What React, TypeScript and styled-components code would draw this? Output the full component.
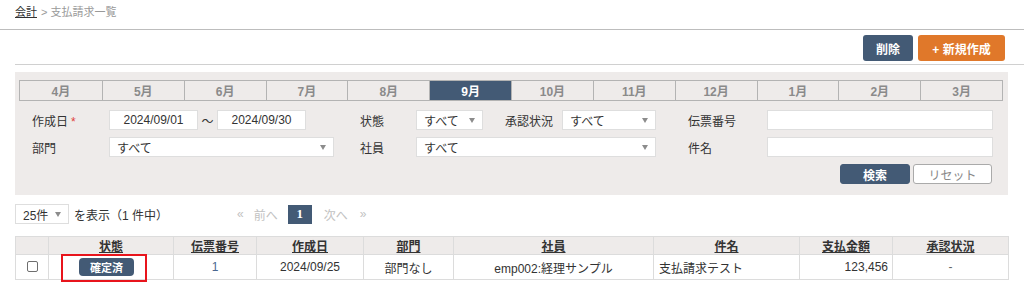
import React from 'react';
import styled, { createGlobalStyle } from 'styled-components';

const Global = createGlobalStyle`
  html, body { margin: 0; padding: 0; background: #fff; min-height: 291px; }
  body {
    font-family: "Liberation Sans", Arial, "Noto Sans CJK JP", sans-serif;
    font-size: 12px;
    color: #333;
  }
  * { box-sizing: border-box; }
`;

const NAVY = '#435a75';

const Page = styled.div`
  padding-bottom: 12px;
`;

const Breadcrumb = styled.div`
  height: 30px;
  border-bottom: 1px solid #bdbdbd;
  padding: 5px 0 0 15px;
  font-size: 11px;
  line-height: 14px;
  color: #999;
`;

const CrumbLink = styled.span`
  color: #333;
  text-decoration: underline;
  margin-right: 4px;
`;

const Toolbar = styled.div`
  display: flex;
  justify-content: flex-end;
  gap: 5px;
  margin-left: 15px;
  padding: 5px 19px 3px 0;
  border-bottom: 1px solid #d0d0d0;
`;

const ActionButton = styled.button<{ $color: string; $w: number }>`
  width: ${p => p.$w}px;
  height: 26px;
  border: none;
  border-radius: 3px;
  background: ${p => p.$color};
  color: #fff;
  font-family: inherit;
  font-size: 12px;
  font-weight: bold;
  padding: 0;
`;

const Panel = styled.div`
  margin: 7px 16px 0 15px;
  background: #eeebea;
  padding: 8px 5px 11px 4px;
`;

const MonthBar = styled.div`
  display: grid;
  grid-template-columns: repeat(12, 1fr);
  border: 1px solid #b3b3b3;
  height: 21px;
`;

const MonthCell = styled.div<{ $active?: boolean }>`
  display: flex;
  align-items: center;
  justify-content: center;
  border-left: 1px solid #b3b3b3;
  &:first-child { border-left: none; }
  background: ${p => (p.$active ? NAVY : 'transparent')};
  color: ${p => (p.$active ? '#fff' : '#8a8a8a')};
  font-weight: bold;
  font-size: 12px;
`;

const Form = styled.div`
  display: grid;
  grid-template-columns: 77px 251px 56px 272px 79px 226px;
  grid-auto-rows: 20px;
  row-gap: 7px;
  margin: 9px 0 0 13px;
  align-items: center;
`;

const Label = styled.div`
  font-size: 12px;
  color: #333;
  white-space: nowrap;
`;

const Required = styled.span`
  color: #e0413a;
  margin-left: 3px;
`;

const FieldGroup = styled.div`
  display: flex;
  align-items: center;
  height: 20px;
`;

const TextInput = styled.div<{ $w: number; $center?: boolean }>`
  width: ${p => p.$w}px;
  height: 20px;
  background: #fff;
  border: 1px solid #dedede;
  display: flex;
  align-items: center;
  justify-content: ${p => (p.$center ? 'center' : 'flex-start')};
  padding: 0 6px;
  color: #333;
  font-size: 12px;
`;

const Tilde = styled.div`
  width: 19px;
  text-align: center;
  color: #333;
`;

const Select = styled.div<{ $w: number; $h?: number }>`
  width: ${p => p.$w}px;
  height: ${p => p.$h ?? 20}px;
  background: #fff;
  border: 1px solid #dedede;
  display: flex;
  align-items: center;
  justify-content: space-between;
  padding: 0 7px 0 7px;
  color: #333;
  font-size: 12px;
  flex: none;
`;

const Arrow = styled.span`
  width: 0;
  height: 0;
  border-left: 3.5px solid transparent;
  border-right: 3.5px solid transparent;
  border-top: 5px solid #8c8c8c;
`;

const InlineLabel = styled(Label)`
  width: 57px;
  margin-left: 22px;
`;

const ButtonRow = styled.div`
  grid-column: 1 / -1;
  display: flex;
  justify-content: flex-end;
  gap: 3px;
  margin-right: 1px;
  height: 20px;
  align-self: start;
`;

const SearchButton = styled.button<{ $primary?: boolean; $w: number }>`
  width: ${p => p.$w}px;
  height: 20px;
  border-radius: 3px;
  border: 1px solid ${p => (p.$primary ? NAVY : '#aaa')};
  background: ${p => (p.$primary ? NAVY : '#fff')};
  color: ${p => (p.$primary ? '#fff' : '#888')};
  font-family: inherit;
  font-weight: ${p => (p.$primary ? 'bold' : 'normal')};
  font-size: 12px;
  padding: 0;
`;

const PagerRow = styled.div`
  display: flex;
  align-items: center;
  margin: 9px 0 0 15px;
  height: 20px;
`;

const PerPage = styled.div`
  display: flex;
  align-items: center;
  width: 222px;
  gap: 5px;
`;

const Pager = styled.div`
  display: flex;
  align-items: center;
  color: #c2c2c2;
  font-size: 12px;
`;

const PagerText = styled.span<{ $ml: number }>`
  margin-left: ${p => p.$ml}px;
`;

const PageBox = styled.span`
  margin-left: 10px;
  width: 24px;
  height: 19px;
  background: ${NAVY};
  color: #fff;
  font-family: "Liberation Serif", "Times New Roman", serif;
  font-weight: bold;
  font-size: 13px;
  display: flex;
  align-items: center;
  justify-content: center;
`;

const Table = styled.table`
  margin: 12px 0 0 15px;
  width: 993px;
  border-collapse: collapse;
  table-layout: fixed;
  font-size: 12px;
`;

const Th = styled.th`
  height: 18px;
  background: #eeebea;
  border: 1px solid #dcdcdc;
  font-weight: bold;
  text-decoration: underline;
  color: #333;
  padding: 0;
  text-align: center;
`;

const Td = styled.td<{ $align?: string; $pad?: string; $color?: string }>`
  height: 25px;
  border: 1px solid #dcdcdc;
  padding: ${p => p.$pad ?? '0'};
  text-align: ${p => p.$align ?? 'center'};
  color: ${p => p.$color ?? '#333'};
  position: relative;
`;

const CheckBox = styled.span`
  display: inline-block;
  width: 11px;
  height: 11px;
  border: 1px solid #6e6e6e;
  border-radius: 2px;
  background: #fff;
  vertical-align: middle;
  margin-top: -3px;
`;

const StatusBadge = styled.span`
  display: inline-flex;
  align-items: center;
  justify-content: center;
  width: 55px;
  height: 18px;
  border-radius: 4px;
  background: ${NAVY};
  color: #fff;
  font-size: 11px;
  font-weight: bold;
  vertical-align: middle;
`;

const Highlight = styled.span`
  position: absolute;
  left: 12px;
  top: -1px;
  width: 86px;
  height: 28px;
  border: 2px solid #e8141c;
  pointer-events: none;
  z-index: 2;
`;

const months = ['4月', '5月', '6月', '7月', '8月', '9月', '10月', '11月', '12月', '1月', '2月', '3月'];
const cols = [33, 125, 83, 107, 90, 200, 146, 93, 116];
const headers = ['', '状態', '伝票番号', '作成日', '部門', '社員', '件名', '支払金額', '承認状況'];

export default function App() {
  return (
    <Page>
      <Global />
      <Breadcrumb>
        <CrumbLink>会計</CrumbLink>&gt; 支払請求一覧
      </Breadcrumb>
      <Toolbar>
        <ActionButton $color={NAVY} $w={50}>削除</ActionButton>
        <ActionButton $color="#e0782a" $w={87}>+ 新規作成</ActionButton>
      </Toolbar>
      <Panel>
        <MonthBar>
          {months.map(m => (
            <MonthCell key={m} $active={m === '9月'}>{m}</MonthCell>
          ))}
        </MonthBar>
        <Form>
          <Label>作成日<Required>*</Required></Label>
          <FieldGroup>
            <TextInput $w={89} $center>2024/09/01</TextInput>
            <Tilde>〜</Tilde>
            <TextInput $w={89} $center>2024/09/30</TextInput>
          </FieldGroup>
          <Label>状態</Label>
          <FieldGroup>
            <Select $w={67}>すべて<Arrow /></Select>
            <InlineLabel>承認状況</InlineLabel>
            <Select $w={94}>すべて<Arrow /></Select>
          </FieldGroup>
          <Label>伝票番号</Label>
          <TextInput $w={226} />

          <Label>部門</Label>
          <Select $w={225}>すべて<Arrow /></Select>
          <Label>社員</Label>
          <Select $w={240}>すべて<Arrow /></Select>
          <Label>件名</Label>
          <TextInput $w={226} />

          <ButtonRow>
            <SearchButton $primary $w={70}>検索</SearchButton>
            <SearchButton $w={79}>リセット</SearchButton>
          </ButtonRow>
        </Form>
      </Panel>
      <PagerRow>
        <PerPage>
          <Select $w={54}>25件<Arrow /></Select>
          <span>を表示（1 件中）</span>
        </PerPage>
        <Pager>
          <span>«</span>
          <PagerText $ml={10}>前へ</PagerText>
          <PageBox>1</PageBox>
          <PagerText $ml={12}>次へ</PagerText>
          <PagerText $ml={12}>»</PagerText>
        </Pager>
      </PagerRow>
      <Table>
        <colgroup>
          {cols.map((w, i) => <col key={i} style={{ width: w }} />)}
        </colgroup>
        <thead>
          <tr>
            {headers.map((h, i) => <Th key={i}>{h}</Th>)}
          </tr>
        </thead>
        <tbody>
          <tr>
            <Td><CheckBox /></Td>
            <Td $align="left" $pad="0 0 0 30px">
              <StatusBadge>確定済</StatusBadge>
              <Highlight />
            </Td>
            <Td $color="#4a6790">1</Td>
            <Td>2024/09/25</Td>
            <Td>部門なし</Td>
            <Td>emp002:経理サンプル</Td>
            <Td $align="left" $pad="0 0 0 5px">支払請求テスト</Td>
            <Td $align="right" $pad="0 4px 0 0">123,456</Td>
            <Td $color="#666">-</Td>
          </tr>
        </tbody>
      </Table>
    </Page>
  );
}
